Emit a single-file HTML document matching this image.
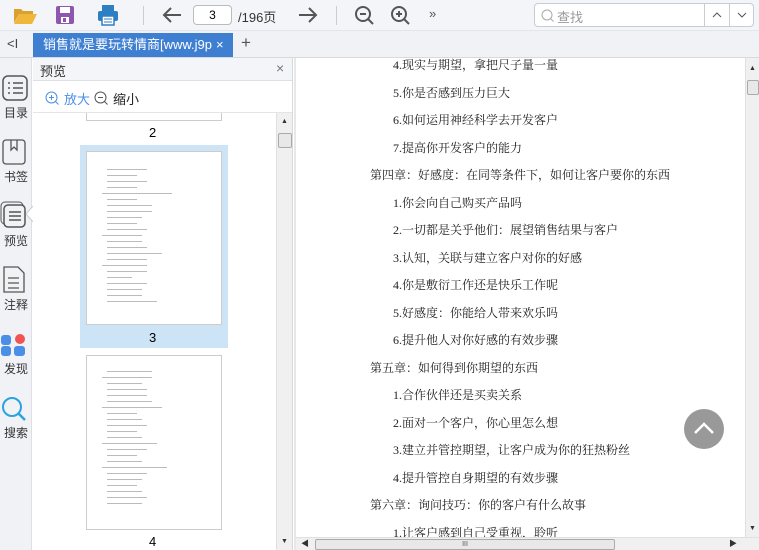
<!DOCTYPE html>
<html><head><meta charset="utf-8"><style>
*{margin:0;padding:0;box-sizing:border-box}
body{width:759px;height:550px;overflow:hidden;background:#fff;font-family:"Liberation Sans","Noto Sans CJK SC",sans-serif;position:relative}
.abs{position:absolute}
.tb{left:0;top:0;width:759px;height:31px;background:#f3f5f8;border-bottom:1px solid #e2e5ea}
.tabbar{left:0;top:31px;width:759px;height:27px;background:#f0f2f5;border-bottom:1px solid #d6d9de}
.side{left:0;top:58px;width:32px;height:492px;background:#f0f2f5;border-right:1px solid #dcdfe4}
.side div{position:absolute;left:0;width:32px;text-align:center;font-size:12px;color:#333}
.pv{left:33px;top:58px;width:260px;height:492px;background:#fff;border-right:1px solid #d6d9de}
.line{position:absolute;font-family:"Liberation Serif","Noto Serif CJK SC",serif;font-size:12px;color:#222;white-space:nowrap}
.th{position:absolute;background:#fff;border:1px solid #ccc}
.th i{position:absolute;height:1px;background:#bbb}
</style></head><body>
<div class="abs tb">
 <svg class="abs" style="left:13px;top:6px" width="24" height="18"><path d="M1 3h7l2 2h10v3H6L1 17z" fill="#d9a12d"/><path d="M6 8h18l-5 10H1z" fill="#f0b73a"/></svg>
 <svg class="abs" style="left:55px;top:5px" width="20" height="20"><rect x="1" y="1" width="18" height="18" rx="2" fill="#8d57b0"/><rect x="5" y="2" width="10" height="6" fill="#fff"/><rect x="6" y="12" width="8" height="6" fill="#fff"/><rect x="8" y="13" width="3" height="4" fill="#8d57b0"/></svg>
 <svg class="abs" style="left:97px;top:4px" width="22" height="22"><rect x="5" y="1" width="12" height="6" fill="#2d7fc4"/><rect x="1" y="7" width="20" height="10" rx="2" fill="#2d7fc4"/><rect x="5" y="12" width="12" height="9" fill="#fff" stroke="#2d7fc4" stroke-width="1.5"/><path d="M7 15h8M7 18h8" stroke="#2d7fc4"/></svg>
 <div class="abs" style="left:143px;top:6px;width:1px;height:19px;background:#ccc"></div>
 <svg class="abs" style="left:162px;top:6px" width="20" height="18"><path d="M19 9H3M9 2L2 9l7 7" stroke="#555" stroke-width="2" fill="none"/></svg>
 <div class="abs" style="left:193px;top:5px;width:39px;height:20px;border:1px solid #bbb;border-radius:4px;background:#fff;font-size:12px;text-align:center;line-height:18px">3</div>
 <div class="abs" style="left:238px;top:7px;font-size:13px;color:#333">/196页</div>
 <svg class="abs" style="left:298px;top:6px" width="20" height="18"><path d="M1 9h16M11 2l7 7-7 7" stroke="#555" stroke-width="2" fill="none"/></svg>
 <div class="abs" style="left:336px;top:6px;width:1px;height:19px;background:#ccc"></div>
 <svg class="abs" style="left:354px;top:5px" width="22" height="22"><circle cx="9" cy="9" r="7" stroke="#555" stroke-width="2" fill="none"/><path d="M6 9h6M14 14l5 5" stroke="#555" stroke-width="2"/></svg>
 <svg class="abs" style="left:390px;top:5px" width="22" height="22"><circle cx="9" cy="9" r="7" stroke="#555" stroke-width="2" fill="none"/><path d="M6 9h6M9 6v6M14 14l5 5" stroke="#555" stroke-width="2"/></svg>
 <div class="abs" style="left:429px;top:6px;font-size:13px;color:#555">»</div>
 <div class="abs" style="left:534px;top:3px;width:220px;height:24px;border:1px solid #c8ccd2;border-radius:4px;background:#fff">
  <svg class="abs" style="left:6px;top:5px" width="14" height="14"><circle cx="6" cy="6" r="5" stroke="#aaa" fill="none"/><path d="M9.5 9.5l3 3" stroke="#aaa"/></svg>
  <div class="abs" style="left:22px;top:3px;font-size:13px;color:#999">查找</div>
  <div class="abs" style="left:169px;top:0;width:1px;height:22px;background:#ccc"></div>
  <div class="abs" style="left:194px;top:0;width:1px;height:22px;background:#ccc"></div>
  <svg class="abs" style="left:177px;top:8px" width="10" height="6"><path d="M1 5l4-4 4 4" stroke="#555" fill="none"/></svg>
  <svg class="abs" style="left:202px;top:8px" width="10" height="6"><path d="M1 1l4 4 4-4" stroke="#555" fill="none"/></svg>
 </div>
</div>
<div class="abs tabbar">
 <div class="abs" style="left:7px;top:5px;font-size:13px;color:#444">&lt;I</div>
 <div class="abs" style="left:33px;top:2px;width:200px;height:24px;background:#3f7fd2;color:#fff;font-size:13px;line-height:24px">
  <div class="abs" style="left:10px;top:0;width:170px;overflow:hidden;white-space:nowrap">销售就是要玩转情商[www.j9p.c</div>
  <span style="position:absolute;left:183px">×</span></div>
 <div class="abs" style="left:241px;top:2px;font-size:17px;color:#555">+</div>
</div>
<div class="abs side">
 <svg class="abs" style="left:2px;top:17px" width="26" height="26"><rect x="1" y="1" width="24" height="24" rx="5" stroke="#555" stroke-width="1.5" fill="none"/><path d="M6 8h2M11 8h10M6 13h2M11 13h10M6 18h2M11 18h10" stroke="#555" stroke-width="1.5"/></svg>
 <div style="top:46px">目录</div>
 <svg class="abs" style="left:2px;top:81px" width="24" height="26"><rect x="1" y="1" width="22" height="24" rx="3" stroke="#555" stroke-width="1.3" fill="none"/><path d="M9 1v10l3-3 3 3V1" stroke="#555" stroke-width="1.3" fill="none"/></svg>
 <div style="top:110px">书签</div>
 <svg class="abs" style="left:0;top:143px" width="28" height="28"><rect x="1" y="1" width="22" height="22" rx="4" stroke="#555" fill="none"/><rect x="4" y="4" width="21" height="22" rx="4" stroke="#555" stroke-width="1.5" fill="#f0f2f5"/><path d="M9 11h12M9 15h12M9 19h12" stroke="#555" stroke-width="1.5"/></svg>
 <div style="top:174px">预览</div>
 <svg class="abs" style="left:2px;top:208px" width="24" height="28"><path d="M2 1h14l6 6v19H2z" stroke="#555" stroke-width="1.3" fill="none"/><path d="M6 12h11M6 17h11M6 22h11" stroke="#555" stroke-width="1.3"/></svg>
 <div style="top:238px">注释</div>
 <svg class="abs" style="left:1px;top:273px" width="26" height="26"><rect x="0" y="4" width="10" height="10" rx="3" fill="#4a8fe7"/><circle cx="19" cy="8" r="5" fill="#f05454"/><rect x="0" y="15" width="10" height="10" rx="3" fill="#4a8fe7"/><rect x="13" y="15" width="11" height="10" rx="3" fill="#4a8fe7"/></svg>
 <div style="top:302px">发现</div>
 <svg class="abs" style="left:1px;top:338px" width="26" height="26"><circle cx="11" cy="11" r="9" stroke="#29a3e0" stroke-width="2" fill="none"/><path d="M17 17l7 7" stroke="#29a3e0" stroke-width="2.5"/></svg>
 <div style="top:366px">搜索</div>
 <svg class="abs" style="left:26px;top:148px" width="8" height="16"><path d="M7 0L0 8l7 8" fill="#fff" stroke="#ccc"/></svg>
</div>
<div class="abs pv">
 <div class="abs" style="left:0;top:0;width:259px;height:23px;background:#f3f5f8;border-bottom:1px solid #dcdfe4">
  <div class="abs" style="left:7px;top:3px;font-size:13px;color:#333">预览</div>
  <div class="abs" style="left:243px;top:2px;font-size:14px;color:#777">×</div>
 </div>
 <svg class="abs" style="left:12px;top:33px" width="14" height="14"><circle cx="6.5" cy="6.5" r="5.5" stroke="#4a8fe7" fill="none"/><path d="M4 6.5h5M6.5 4v5M10.5 10.5l3 3" stroke="#4a8fe7"/></svg>
 <div class="abs" style="left:31px;top:31px;font-size:13px;color:#4a8fe7">放大</div>
 <svg class="abs" style="left:61px;top:33px" width="14" height="14"><circle cx="6.5" cy="6.5" r="5.5" stroke="#555" fill="none"/><path d="M4 6.5h5M10.5 10.5l3 3" stroke="#555"/></svg>
 <div class="abs" style="left:80px;top:31px;font-size:13px;color:#222">缩小</div>
 <div class="abs" style="left:0;top:54px;width:259px;height:1px;background:#e5e5e5"></div>
 <div class="abs" style="left:0;top:55px;width:243px;height:437px;overflow:hidden">
 <div class="th" style="left:53px;top:-20px;width:136px;height:28px"></div>
 <div class="abs" style="left:116px;top:12px;font-size:13px">2</div>
 <div class="abs" style="left:47px;top:32px;width:148px;height:203px;background:#cde4f7"></div>
 <div class="th" style="left:53px;top:38px;width:136px;height:174px">
  <i style="left:20px;top:17px;width:40px"></i><i style="left:20px;top:23px;width:30px"></i><i style="left:20px;top:29px;width:40px"></i><i style="left:20px;top:35px;width:30px"></i><i style="left:15px;top:41px;width:70px"></i><i style="left:20px;top:47px;width:30px"></i><i style="left:20px;top:53px;width:45px"></i><i style="left:20px;top:59px;width:45px"></i><i style="left:20px;top:65px;width:35px"></i><i style="left:20px;top:71px;width:30px"></i><i style="left:20px;top:77px;width:40px"></i><i style="left:15px;top:83px;width:40px"></i><i style="left:20px;top:89px;width:35px"></i><i style="left:20px;top:95px;width:40px"></i><i style="left:20px;top:101px;width:55px"></i><i style="left:20px;top:107px;width:40px"></i><i style="left:15px;top:113px;width:45px"></i><i style="left:20px;top:119px;width:40px"></i><i style="left:20px;top:125px;width:25px"></i><i style="left:20px;top:131px;width:40px"></i><i style="left:20px;top:137px;width:35px"></i><i style="left:20px;top:143px;width:35px"></i><i style="left:20px;top:149px;width:50px"></i>
 </div>
 <div class="abs" style="left:116px;top:217px;font-size:13px">3</div>
 <div class="th" style="left:53px;top:242px;width:136px;height:175px">
  <i style="left:20px;top:15px;width:45px"></i><i style="left:15px;top:21px;width:50px"></i><i style="left:20px;top:27px;width:35px"></i><i style="left:20px;top:33px;width:40px"></i><i style="left:20px;top:39px;width:40px"></i><i style="left:20px;top:45px;width:45px"></i><i style="left:15px;top:51px;width:60px"></i><i style="left:20px;top:57px;width:30px"></i><i style="left:20px;top:63px;width:35px"></i><i style="left:20px;top:69px;width:40px"></i><i style="left:20px;top:75px;width:30px"></i><i style="left:20px;top:81px;width:35px"></i><i style="left:15px;top:87px;width:55px"></i><i style="left:20px;top:93px;width:40px"></i><i style="left:20px;top:99px;width:30px"></i><i style="left:20px;top:105px;width:35px"></i><i style="left:15px;top:111px;width:65px"></i><i style="left:20px;top:117px;width:40px"></i><i style="left:20px;top:123px;width:35px"></i><i style="left:20px;top:129px;width:30px"></i><i style="left:20px;top:135px;width:35px"></i><i style="left:20px;top:141px;width:40px"></i><i style="left:20px;top:147px;width:35px"></i>
 </div>
 <div class="abs" style="left:116px;top:421px;font-size:13px">4</div>
 </div>
 <div class="abs" style="left:243px;top:55px;width:16px;height:437px;background:#f0f0f0;border-left:1px solid #e0e0e0">
  <div class="abs" style="left:4px;top:5px;font-size:7px;color:#333">▲</div>
  <div class="abs" style="left:1px;top:20px;width:14px;height:15px;background:#e8e8e8;border:1px solid #aaa;border-radius:2px"></div>
  <div class="abs" style="left:4px;top:425px;font-size:7px;color:#333">▼</div>
 </div>
</div>
<div class="abs" style="left:294px;top:58px;width:2px;height:492px;background:#e8e8e8"></div>
<div class="abs" style="left:296px;top:58px;width:449px;height:479px;background:#fff;overflow:hidden">
 <div class="line" style="left:97px;top:-2px">4.现实与期望，拿把尺子量一量</div>
 <div class="line" style="left:97px;top:26px">5.你是否感到压力巨大</div>
 <div class="line" style="left:97px;top:53px">6.如何运用神经科学去开发客户</div>
 <div class="line" style="left:97px;top:81px">7.提高你开发客户的能力</div>
 <div class="line" style="left:74px;top:108px">第四章：好感度：在同等条件下，如何让客户要你的东西</div>
 <div class="line" style="left:97px;top:136px">1.你会向自己购买产品吗</div>
 <div class="line" style="left:97px;top:163px">2.一切都是关乎他们：展望销售结果与客户</div>
 <div class="line" style="left:97px;top:191px">3.认知，关联与建立客户对你的好感</div>
 <div class="line" style="left:97px;top:218px">4.你是敷衍工作还是快乐工作呢</div>
 <div class="line" style="left:97px;top:246px">5.好感度：你能给人带来欢乐吗</div>
 <div class="line" style="left:97px;top:273px">6.提升他人对你好感的有效步骤</div>
 <div class="line" style="left:74px;top:301px">第五章：如何得到你期望的东西</div>
 <div class="line" style="left:97px;top:328px">1.合作伙伴还是买卖关系</div>
 <div class="line" style="left:97px;top:356px">2.面对一个客户，你心里怎么想</div>
 <div class="line" style="left:97px;top:383px">3.建立并管控期望，让客户成为你的狂热粉丝</div>
 <div class="line" style="left:97px;top:411px">4.提升管控自身期望的有效步骤</div>
 <div class="line" style="left:74px;top:438px">第六章：询问技巧：你的客户有什么故事</div>
 <div class="line" style="left:97px;top:466px">1.让客户感到自己受重视，聆听</div>
 <div class="abs" style="left:388px;top:351px;width:40px;height:40px;border-radius:50%;background:#999"><svg width="40" height="40"><path d="M11 24l9-9 9 9" stroke="#fff" stroke-width="2.5" fill="none"/></svg></div>
</div>
<div class="abs" style="left:745px;top:58px;width:14px;height:479px;background:#f0f0f0;border-left:1px solid #e0e0e0">
 <div class="abs" style="left:3px;top:7px;font-size:7px;color:#333">▲</div>
 <div class="abs" style="left:1px;top:22px;width:12px;height:15px;background:#e8e8e8;border:1px solid #aaa;border-radius:2px"></div>
 <div class="abs" style="left:3px;top:467px;font-size:7px;color:#333">▼</div>
</div>
<div class="abs" style="left:296px;top:537px;width:463px;height:13px;background:#f0f0f0;border-top:1px solid #e0e0e0">
 <div class="abs" style="left:5px;top:0;font-size:8px;color:#333">◀</div>
 <div class="abs" style="left:19px;top:1px;width:300px;height:11px;background:#e8e8e8;border:1px solid #aaa;border-radius:2px;font-size:7px;text-align:center;line-height:9px;color:#555">III</div>
 <div class="abs" style="left:433px;top:0;font-size:8px;color:#333">▶</div>
</div>
</body></html>
